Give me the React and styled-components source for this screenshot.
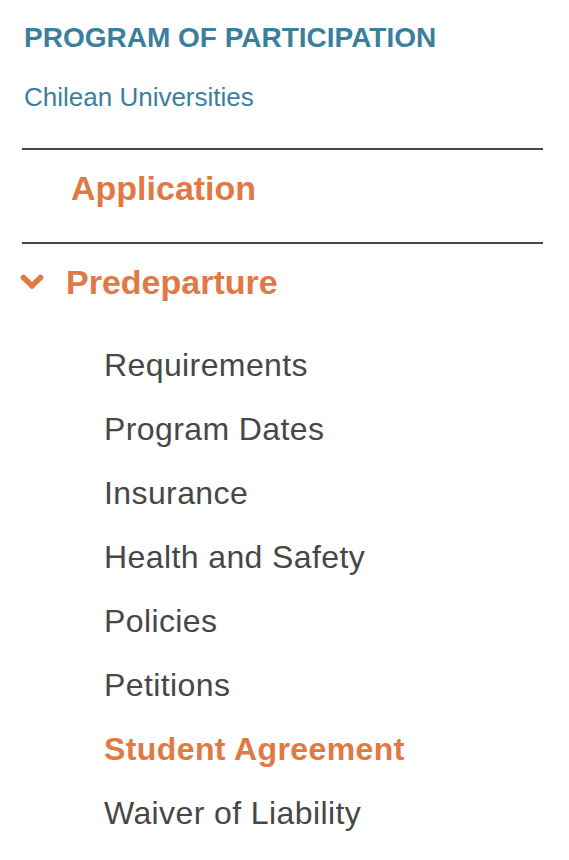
import React from "react";
import styled, { createGlobalStyle } from "styled-components";

const GlobalStyle = createGlobalStyle`
  body {
    margin: 0;
    background: #ffffff;
    font-family: "Liberation Sans", Arial, sans-serif;
  }
`;

const ORANGE = "#e07944";
const BLUE = "#3b7f9e";
const GREY = "#474747";

const items = [
  { label: "Requirements" },
  { label: "Program Dates" },
  { label: "Insurance" },
  { label: "Health and Safety" },
  { label: "Policies" },
  { label: "Petitions" },
  { label: "Student Agreement", active: true },
  { label: "Waiver of Liability" },
];

const App = () => (
  <>
    <GlobalStyle />
    <Sidebar>
      <Header>
        <Title>PROGRAM OF PARTICIPATION</Title>
        <Subtitle>Chilean Universities</Subtitle>
      </Header>
      <Section>
        <SectionLink $indent>Application</SectionLink>
      </Section>
      <Section>
        <SectionHead>
          <Chevron viewBox="0 0 24 16" aria-hidden="true">
            <polyline points="3.5,3.5 12,12 20.5,3.5" />
          </Chevron>
          <SectionLink>Predeparture</SectionLink>
        </SectionHead>
        <SubList>
          {items.map(item => (
            <SubItem key={item.label} $active={item.active}>
              {item.label}
            </SubItem>
          ))}
        </SubList>
      </Section>
    </Sidebar>
  </>
);

const Sidebar = styled.nav`
  width: 521px;
  margin-left: 22px;
  padding-top: 20px;
`;

const Header = styled.div`
  padding: 0 0 35px 2px;
`;

const Title = styled.h2`
  margin: 0;
  font-size: 28px;
  font-weight: 700;
  line-height: 36px;
  color: ${BLUE};
`;

const Subtitle = styled.p`
  margin: 25px 0 0;
  font-size: 26px;
  font-weight: 400;
  line-height: 32px;
  color: ${BLUE};
`;

const Section = styled.div`
  border-top: 2px solid ${GREY};
  padding: 14px 0 30px;
`;

const SectionHead = styled.div`
  display: flex;
  align-items: center;
  gap: 22px;
  margin-left: -2px;
`;

const Chevron = styled.svg`
  width: 24px;
  height: 16px;
  fill: none;
  stroke: ${ORANGE};
  stroke-width: 5.5;
  stroke-linecap: round;
  stroke-linejoin: round;
`;

const SectionLink = styled.a`
  display: block;
  padding-left: ${p => (p.$indent ? "49px" : "0")};
  font-size: 34px;
  font-weight: 700;
  line-height: 48px;
  color: ${ORANGE};
  text-decoration: none;
  cursor: pointer;
`;

const SubList = styled.ul`
  list-style: none;
  margin: 27px 0 0;
  padding: 0 0 0 82px;
  display: flex;
  flex-direction: column;
`;

const SubItem = styled.li`
  font-size: 32px;
  line-height: 64px;
  letter-spacing: 0.4px;
  font-weight: ${p => (p.$active ? 700 : 400)};
  color: ${p => (p.$active ? ORANGE : GREY)};
  cursor: pointer;
`;

export default App;
